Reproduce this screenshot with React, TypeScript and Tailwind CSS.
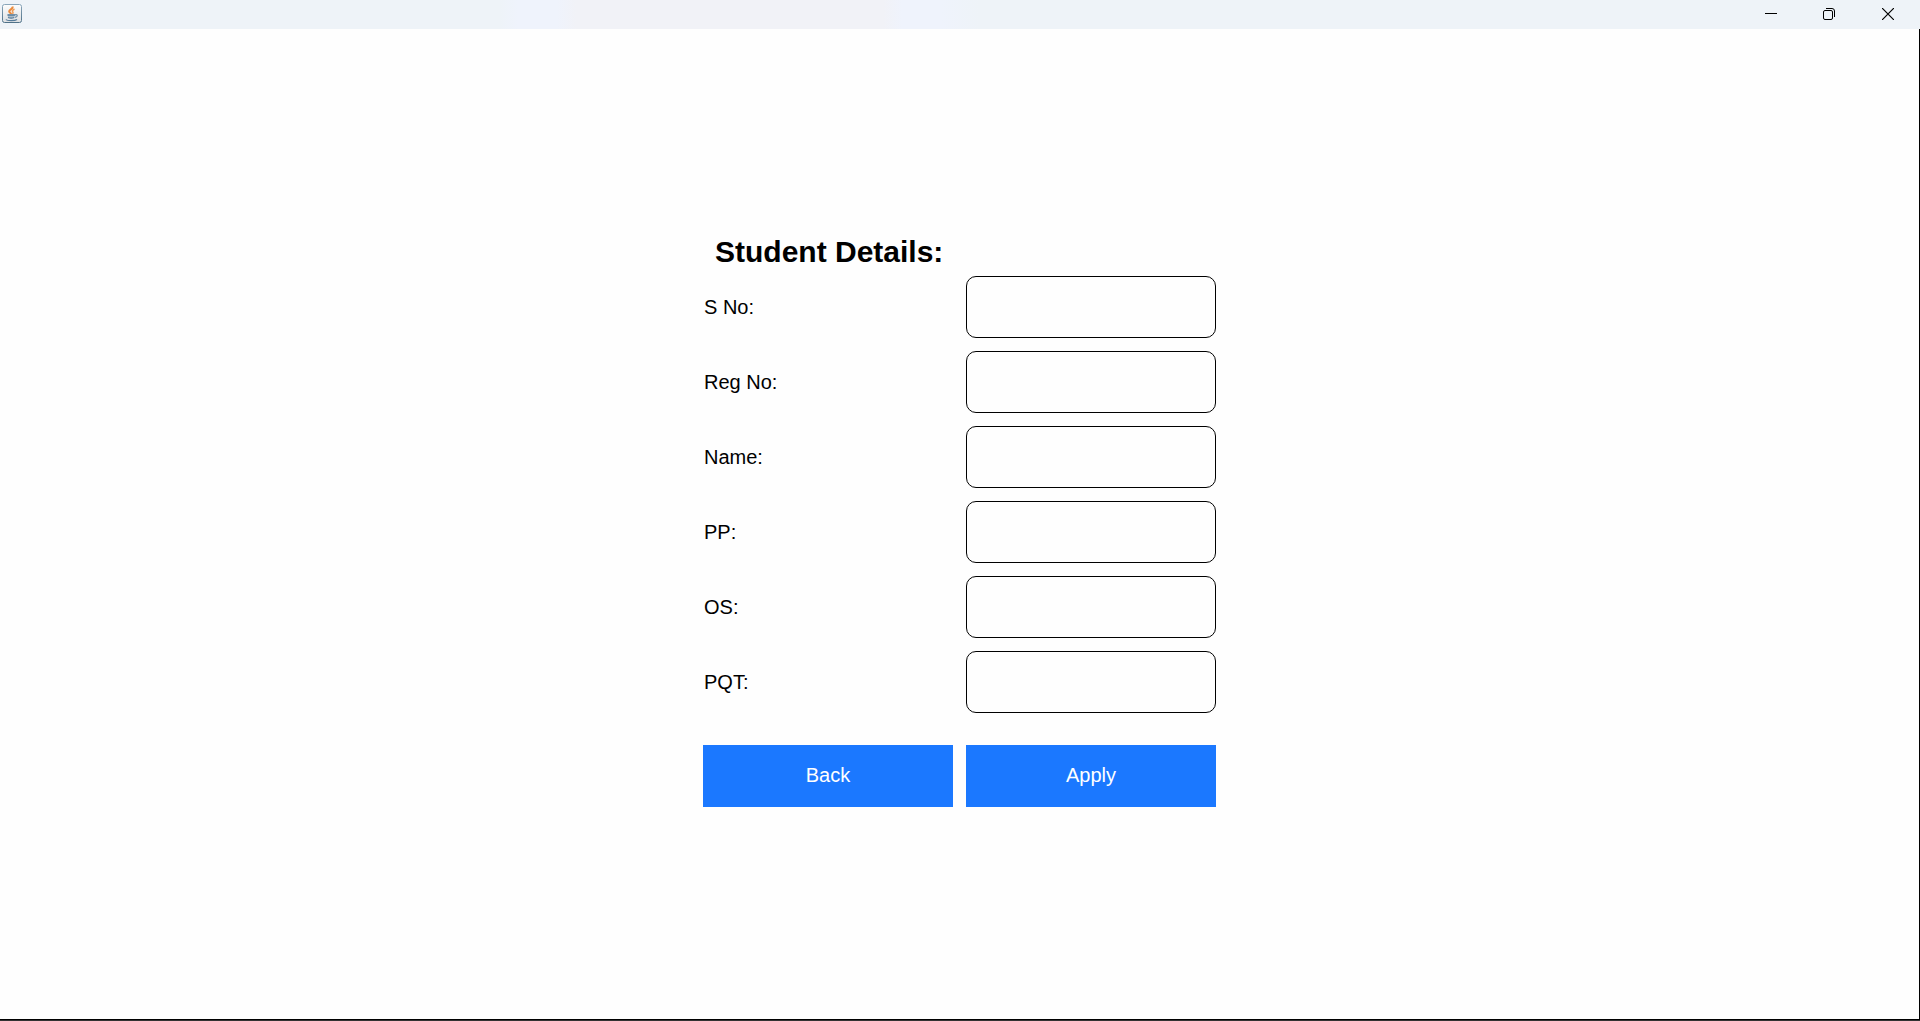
import React from "react";

const FIELDS = [
  { id: "sno", label: "S No:" },
  { id: "regno", label: "Reg No:" },
  { id: "name", label: "Name:" },
  { id: "pp", label: "PP:" },
  { id: "os", label: "OS:" },
  { id: "pqt", label: "PQT:" },
];

function JavaIcon() {
  return (
    <svg width="20" height="20" viewBox="0 0 20 20" fill="none" aria-hidden="true">
      <defs>
        <linearGradient id="tile" x1="0" y1="0" x2="0" y2="1">
          <stop offset="0" stopColor="#fdfdfd" />
          <stop offset="1" stopColor="#dcdfe2" />
        </linearGradient>
        <linearGradient id="tileEdge" x1="0" y1="0" x2="0" y2="1">
          <stop offset="0" stopColor="#8aa6ba" />
          <stop offset="1" stopColor="#4f7188" />
        </linearGradient>
      </defs>
      <rect x="0.5" y="0.5" width="19" height="18" rx="2" fill="url(#tile)" stroke="url(#tileEdge)" />
      <path d="M10.500 2.500C11.500 5 7 5.500 7.200 7.500C7.400 8.800 9 9 9.300 10" stroke="#ea8a3c" strokeWidth="2" />
      <path d="M12.500 5C10.500 6 9.800 7 10.800 8C11.300 8.800 11 9.500 10.400 10" stroke="#ee9a55" strokeWidth="1.500" />
      <path d="M5.500 10.500H12.800L12.200 13.500Q9.200 15 6.200 13.500Z" fill="#a9bccb" />
      <path d="M5.500 11H13" stroke="#557b9a" strokeWidth="1.500" />
      <path d="M6 13.500Q9.200 14.800 12.300 13.500" stroke="#557b9a" strokeWidth="1.300" />
      <path d="M13 10.800C16 10 16 12.500 13 13.300" stroke="#6d8da6" strokeWidth="1.200" />
      <path d="M4 15.500C5 17 13 17 15 15.500" stroke="#557b9a" strokeWidth="1.300" />
    </svg>
  );
}

function TitleBar() {
  return (
    <header className="flex h-[29px] shrink-0 items-stretch justify-between bg-[linear-gradient(to_right,#eef3f8_26%,#eff3fc_27%,#eff3fc_29%,#f1f2f7_30%,#f1f2f7_46%,#eff3fc_47%,#eff3fc_49%,#eef3f8_51%)] pr-0.5 pb-px">
      <div className="flex items-center pl-0.5">
        <JavaIcon />
      </div>
      <div className="flex text-black">
        <button type="button" aria-label="Minimize" className="flex w-[58px] items-center justify-center">
          <svg width="12" height="12" viewBox="0 0 12 12" aria-hidden="true">
            <path d="M0 5.500H12" stroke="currentColor" />
          </svg>
        </button>
        <button type="button" aria-label="Restore" className="flex w-[58px] items-center justify-center">
          <svg width="12" height="12" viewBox="0 0 12 12" fill="none" stroke="currentColor" aria-hidden="true">
            <rect x="0.5" y="2.500" width="9" height="9" rx="1.500" />
            <path d="M3 0.500H9A2.500 2.500 0 0 1 11.500 3V9" />
          </svg>
        </button>
        <button type="button" aria-label="Close" className="flex w-[60px] items-center justify-center">
          <svg width="12" height="12" viewBox="0 0 12 12" stroke="currentColor" strokeWidth="1.200" aria-hidden="true">
            <path d="M0 0L12 12M12 0L0 12" />
          </svg>
        </button>
      </div>
    </header>
  );
}

export default function App() {
  return (
    <div className="flex min-h-screen flex-col border-b border-[#333333] bg-white font-['Liberation_Sans',Arial,sans-serif] text-black">
      <TitleBar />
      <main className="flex grow items-center justify-center border-r border-b border-black bg-[#fefefe]">
        <form className="pb-1.5" onSubmit={(e) => e.preventDefault()}>
          <h1 className="mb-2 pl-3 text-[30px] leading-8 font-bold">Student Details:</h1>
          <div className="flex flex-col gap-[13px]">
            {FIELDS.map((f) => (
              <div key={f.id} className="grid grid-cols-[250px_250px] items-center gap-[13px]">
                <label htmlFor={f.id} className="pl-px text-[20px] leading-6">
                  {f.label}
                </label>
                <input
                  id={f.id}
                  type="text"
                  className="h-[62px] w-full rounded-[10px] border border-black bg-[#fefefe] px-3 text-[20px] outline-none"
                />
              </div>
            ))}
          </div>
          <div className="mt-8 grid grid-cols-[250px_250px] gap-[13px] text-[20px] leading-6 text-white">
            <button type="button" className="h-[62px] bg-[#1b78ff] pb-0.5">
              Back
            </button>
            <button type="submit" className="h-[62px] bg-[#1b78ff] pb-0.5">
              Apply
            </button>
          </div>
        </form>
      </main>
    </div>
  );
}
